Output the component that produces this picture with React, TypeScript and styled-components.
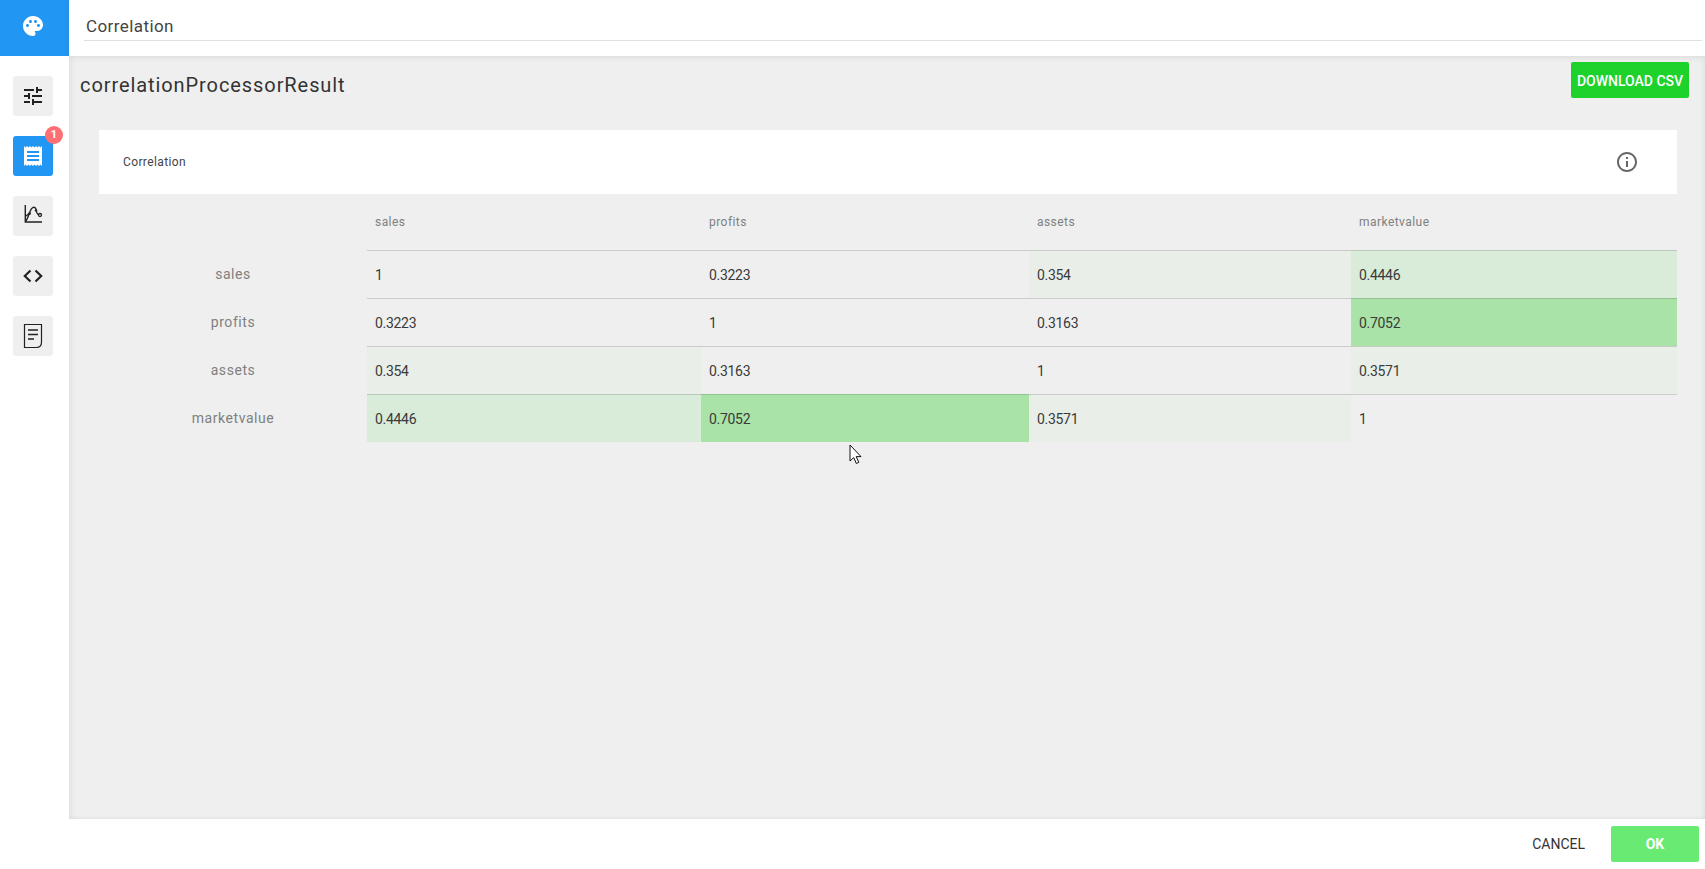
import React from "react";
import styled, { createGlobalStyle } from "styled-components";
import { MdPalette, MdTune, MdReceipt, MdInfoOutline } from "react-icons/md";

const FONT = `Roboto, "Liberation Sans", sans-serif`;

const Global = createGlobalStyle`
  html, body { margin: 0; padding: 0; height: 100%; background: #fff; overflow: hidden; }
  #root { height: 100%; }
  * { box-sizing: border-box; }
`;

const Page = styled.div`
  position: relative;
  width: 1705px;
  height: 869px;
  display: grid;
  grid-template-columns: 69px 1fr;
  grid-template-rows: 56px 1fr 50px;
  font-family: ${FONT};
  color: #333;
`;

const Logo = styled.div`
  background: #2196f3;
  color: #fff;
  display: flex;
  align-items: center;
  justify-content: center;
  padding: 0 3px 4px 0;
`;

const Header = styled.header`
  padding: 14px 3px 0 15px;
  background: #fff;
  position: relative;
  z-index: 2;
  box-shadow: 0 2px 6px rgba(0, 0, 0, 0.07);
`;

const TitleInput = styled.div`
  height: 27px;
  padding: 0 2px;
  font-size: 17px;
  line-height: 25px;
  letter-spacing: 0.42px;
  color: #444;
  border-bottom: 1px solid #e0e0e0;
`;

const Sidebar = styled.nav`
  grid-row: 2 / 4;
  background: #fff;
  padding: 20px 0 0 13px;
  display: flex;
  flex-direction: column;
  gap: 20px;
  position: relative;
  z-index: 1;
`;

const NavButton = styled.div<{ $active?: boolean }>`
  position: relative;
  width: 40px;
  height: 40px;
  border-radius: 3px;
  display: flex;
  align-items: center;
  justify-content: center;
  background: ${(p) => (p.$active ? "#2196f3" : "#efefef")};
  color: ${(p) => (p.$active ? "#fff" : "#222")};
`;

const Badge = styled.span`
  position: absolute;
  top: -10px;
  right: -10px;
  width: 18px;
  height: 18px;
  border-radius: 50%;
  background: #ff6f73;
  color: #fff;
  font-size: 11px;
  font-weight: 700;
  line-height: 18px;
  text-align: center;
`;

const Main = styled.main`
  background: #efefef;
  box-shadow:
    inset 6px 0 5px -3px rgba(0, 0, 0, 0.05),
    inset -5px 0 4px -3px rgba(0, 0, 0, 0.05),
    inset 0 -4px 4px -3px rgba(0, 0, 0, 0.06);
  padding: 6px 16px 0 11px;
  overflow: hidden;
`;

const TopRow = styled.div`
  display: flex;
  justify-content: space-between;
  align-items: flex-start;
  height: 68px;
`;

const PageTitle = styled.h1`
  margin: 10px 0 0;
  font-size: 20px;
  font-weight: 400;
  line-height: 26px;
  letter-spacing: 0.92px;
  color: #333;
`;

const DownloadButton = styled.button`
  width: 118px;
  height: 36px;
  border: 0;
  border-radius: 2px;
  padding: 1px 0 0;
  background: #1cd22b;
  color: #fff;
  font-family: ${FONT};
  font-size: 14px;
  font-weight: 500;
  white-space: nowrap;
`;

const Section = styled.section`
  margin: 0 12px 0 19px;
`;

const CardHead = styled.div`
  height: 64px;
  background: #fff;
  padding: 0 24px;
  display: flex;
  align-items: center;
  justify-content: space-between;
  font-size: 12px;
  color: #444;
  letter-spacing: 0.38px;
`;

const InfoIcon = styled(MdInfoOutline)`
  color: #666;
  margin-right: 14px;
`;

const Grid = styled.div`
  display: grid;
  grid-template-columns: 268px 334px 328px 322px 326px;
  grid-template-rows: 56px repeat(4, 48px);
`;

const HeadCell = styled.div`
  padding: 0 8px;
  display: flex;
  align-items: center;
  font-size: 12px;
  color: #808080;
  letter-spacing: 0.45px;
`;

const RowLabel = styled.div`
  display: flex;
  align-items: center;
  justify-content: center;
  font-size: 14px;
  color: #808080;
  letter-spacing: 0.55px;
`;

const Cell = styled.div<{ $bg: string }>`
  display: flex;
  align-items: center;
  padding: 0 8px;
  font-size: 14px;
  color: #3a3a3a;
  letter-spacing: -0.3px;
  background: ${(p) => p.$bg};
  border-top: 1px solid rgba(0, 0, 0, 0.14);
`;

const Footer = styled.footer`
  background: #fff;
  display: flex;
  align-items: center;
  justify-content: flex-end;
  padding: 0 6px 0 0;
  gap: 26px;
`;

const CancelButton = styled.span`
  font-size: 14px;
  color: #333;
`;

const OkButton = styled.button`
  width: 88px;
  height: 36px;
  border: 0;
  border-radius: 2px;
  background: #69ea72;
  color: #fff;
  font-family: ${FONT};
  font-size: 14px;
  font-weight: 700;
`;

const Cursor = styled.svg`
  position: absolute;
  left: 849px;
  top: 444px;
  z-index: 5;
`;

const names = ["sales", "profits", "assets", "marketvalue"];
const values = [
  ["1", "0.3223", "0.354", "0.4446"],
  ["0.3223", "1", "0.3163", "0.7052"],
  ["0.354", "0.3163", "1", "0.3571"],
  ["0.4446", "0.7052", "0.3571", "1"],
];

const shade = (v: string) => {
  if (v === "0.354" || v === "0.3571") return "#e9eee8";
  if (v === "0.4446") return "#d9ebd9";
  if (v === "0.7052") return "#a9e3a7";
  return "transparent";
};

const ChartIcon = () => (
  <svg width="24" height="24" viewBox="0 0 24 24" fill="none" stroke="currentColor">
    <path d="M4.3 1V18H21" strokeWidth="1.4" />
    <path d="M5 17C7 14 8 10 9.5 6.5C10.5 4 12.5 2.6 14 3.6C15.5 4.8 15.3 7.5 16 9C16.6 10.2 17.2 10.8 18 11" strokeWidth="1.4" />
    <path d="M5 12L8 9.5" strokeWidth="1.2" />
    <circle cx="19" cy="11" r="1.5" strokeWidth="1.3" />
    <circle cx="8.6" cy="9.6" r="1.3" fill="currentColor" stroke="none" />
    <circle cx="15" cy="6.4" r="1.2" fill="currentColor" stroke="none" />
  </svg>
);

const CodeIcon = () => (
  <svg width="24" height="24" viewBox="0 0 24 24" fill="none" stroke="currentColor" strokeWidth="2.2">
    <path d="M9.5 6.5L3.8 12L9.5 17.5" />
    <path d="M14.5 6.5L20.2 12L14.5 17.5" />
  </svg>
);

const DocIcon = () => (
  <svg width="24" height="26" viewBox="0 0 24 26" fill="none" stroke="currentColor" strokeWidth="1.2">
    <path d="M3.5 1.5H20.5V19C20.5 22.5 19 24.5 15.5 24.5H3.5Z" />
    <path d="M7 7H17M7 11.5H17M7 16H13" strokeWidth="1.3" />
  </svg>
);

export default function App() {
  return (
    <Page>
      <Global />
      <Logo>
        <MdPalette size={24} />
      </Logo>
      <Header>
        <TitleInput>Correlation</TitleInput>
      </Header>
      <Sidebar>
        <NavButton>
          <MdTune size={24} />
        </NavButton>
        <NavButton $active>
          <MdReceipt size={24} />
          <Badge>1</Badge>
        </NavButton>
        <NavButton>
          <ChartIcon />
        </NavButton>
        <NavButton>
          <CodeIcon />
        </NavButton>
        <NavButton>
          <DocIcon />
        </NavButton>
      </Sidebar>
      <Main>
        <TopRow>
          <PageTitle>correlationProcessorResult</PageTitle>
          <DownloadButton>DOWNLOAD CSV</DownloadButton>
        </TopRow>
        <Section>
          <CardHead>
            Correlation
            <InfoIcon size={24} />
          </CardHead>
          <Grid>
            <div />
            {names.map((n) => (
              <HeadCell key={n}>{n}</HeadCell>
            ))}
            {names.map((n, r) => (
              <React.Fragment key={n}>
                <RowLabel>{n}</RowLabel>
                {values[r].map((v, c) => (
                  <Cell key={c} $bg={shade(v)}>
                    {v}
                  </Cell>
                ))}
              </React.Fragment>
            ))}
          </Grid>
        </Section>
      </Main>
      <Footer>
        <CancelButton>CANCEL</CancelButton>
        <OkButton>OK</OkButton>
      </Footer>
      <Cursor width="14" height="22" viewBox="0 0 14 22">
        <path d="M1 1V17L4.8 13.6L7.3 19.5L9.8 18.4L7.2 12.6H12Z" fill="#fff" stroke="#111" strokeWidth="1" />
      </Cursor>
    </Page>
  );
}
